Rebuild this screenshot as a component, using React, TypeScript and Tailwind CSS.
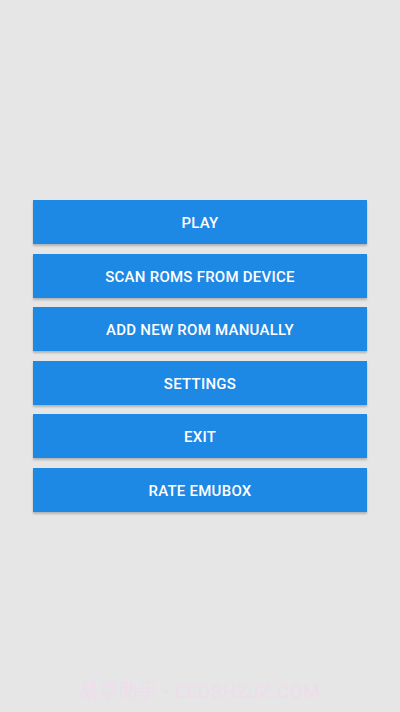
const items = ["PLAY", "SCAN ROMS FROM DEVICE", "ADD NEW ROM MANUALLY", "SETTINGS", "EXIT", "RATE EMUBOX"];

export default function App() {
  return (
    <div className="relative w-[400px] h-[712px] bg-[#e6e6e6] overflow-hidden" style={{ fontFamily: "Roboto, 'Noto Sans CJK SC', sans-serif" }}>
      <div className="flex flex-col gap-[9.5px] pt-[200px] px-[33px]">
        {items.map((t) => (
          <button
            key={t}
            className="h-[44px] w-full pt-[3px] bg-[#1e88e5] text-white text-[15px] font-medium tracking-[0.25px] shadow-[0_2px_2px_rgba(0,0,0,0.22)]"
          >
            {t}
          </button>
        ))}
      </div>
      <div className="absolute left-0 right-0 top-[678px] text-center text-[19px] text-[#efdcec] tracking-[0.5px]">
        易享助手 • EEDSHZJZ.COM
      </div>
    </div>
  );
}
